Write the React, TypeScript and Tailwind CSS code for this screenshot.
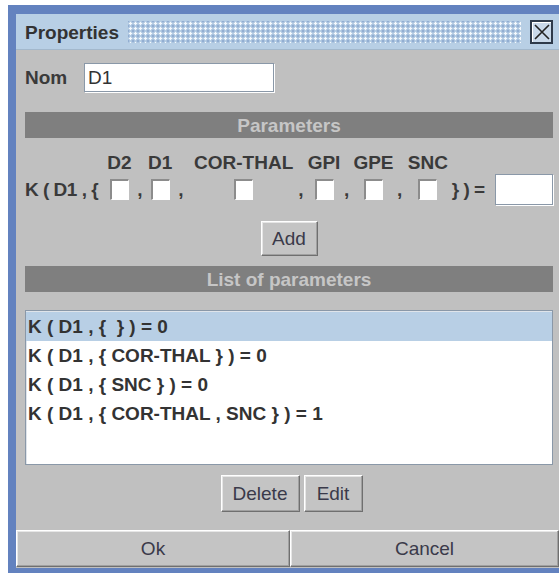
import React from "react";

const cols = [
  { label: "D2", w: "w-[24px]" },
  { label: "D1", w: "w-[22px]" },
  { label: "COR-THAL", w: "w-[97px]" },
  { label: "GPI", w: "w-[28px]" },
  { label: "GPE", w: "w-[35px]" },
  { label: "SNC", w: "w-[38px]" },
];

const rows = [
  "K ( D1 , {  } ) = 0",
  "K ( D1 , { COR-THAL } ) = 0",
  "K ( D1 , { SNC } ) = 0",
  "K ( D1 , { COR-THAL , SNC } ) = 1",
];

function Check() {
  return (
    <span className="block w-[19px] h-[21px] bg-white border-t-2 border-l-2 border-[#8c8c8c] border-r border-b border-r-white border-b-white" />
  );
}

function Btn({ children, className = "" }: { children: React.ReactNode; className?: string }) {
  return (
    <button
      className={`bg-[#c4c4c4] border border-t-white border-l-white border-b-[#6f6f6f] border-r-[#6f6f6f] shadow-[inset_-1px_-1px_0_#a0a0a0,inset_1px_1px_0_#e6e6e6] font-normal text-[#3a3a4a] ${className}`}
    >
      {children}
    </button>
  );
}

function SectionBar({ title }: { title: string }) {
  return (
    <div className="h-[26px] bg-[#7f7f7f] flex items-center justify-center text-[#c6c6c6] font-bold">
      {title}
    </div>
  );
}

export default function App() {
  return (
    <div className="w-[559px] h-[573px] bg-white pt-[5px] pl-[8px] overflow-hidden font-['Liberation_Sans',Arial,sans-serif] text-[19px] text-[#3a3a3a] leading-none">
      <div className="w-[551px] h-[568px] bg-[#6382bf] pt-[9px] pl-[8px] pb-[5px] flex flex-col">
        {/* title bar */}
        <div className="h-[36px] bg-[#b8cfe5] border-b border-[#a3b8cc] flex items-center pl-[9px] pr-[6px]">
          <span className="font-bold text-[#333] pt-[2px]">Properties</span>
          <div className="flex-1 h-[22px] ml-[9px] mr-[9px] bg-[radial-gradient(circle,#f6f9fd_1.1px,transparent_1.4px),radial-gradient(circle,#86a3cc_1.1px,transparent_1.4px)] bg-[length:5px_5px] bg-[position:0_0,2.5px_2.5px]" />
          <div className="w-[23px] h-[24px] border-2 border-[#2e3a4a] bg-[#c9d9ea] shadow-[inset_1px_1px_0_#fff] flex items-center justify-center">
            <svg width="16" height="16" viewBox="0 0 16 16">
              <path d="M1 1 L15 15 M15 1 L1 15" stroke="#222" strokeWidth="1.6" />
            </svg>
          </div>
        </div>

        {/* body */}
        <div className="flex-1 bg-[#c0c0c0] flex flex-col pl-[9px] pr-[6px]">
          <div className="flex items-center mt-[13px] h-[29px]">
            <span className="font-bold w-[59px]">Nom</span>
            <div className="w-[190px] h-[29px] bg-white border border-[#8a98a8] shadow-[1px_1px_0_#fff] flex items-center pl-[3px] text-[#333]">
              D1
            </div>
          </div>

          <div className="mt-[20px]">
            <SectionBar title="Parameters" />
          </div>

          {/* parameter builder */}
          <div className="flex items-end mt-[15px] font-bold">
            <span className="h-[31px] flex items-center w-[83px] whitespace-pre tracking-[-0.5px]">K ( D1 , {"{"}</span>
            {cols.map((c, i) => (
              <React.Fragment key={c.label}>
                {i > 0 && (
                  <span className={`h-[31px] flex items-center ${i === 2 ? "w-[21px] pl-[7px]" : "w-[18px] pl-[6px]"}`}>,</span>
                )}
                <div className={`flex flex-col items-center ${c.w} ${i === 2 ? "ml-[3px]" : ""}`}>
                  <span className="h-[21px] whitespace-nowrap">{c.label}</span>
                  <span className="h-[31px] flex items-center">
                    <Check />
                  </span>
                </div>
              </React.Fragment>
            ))}
            <span className="h-[31px] flex items-center ml-[5px] w-[44px] whitespace-pre tracking-[-0.5px]">{"} ) ="}</span>
            <div className="h-[31px] w-[58px] bg-white border border-[#8a98a8] shadow-[1px_1px_0_#fff]" />
          </div>

          <div className="flex justify-center mt-[16px]">
            <Btn className="w-[57px] h-[35px]">Add</Btn>
          </div>

          <div className="mt-[10px]">
            <SectionBar title="List of parameters" />
          </div>

          {/* list box */}
          <div className="mt-[18px] h-[155px] bg-white border border-[#8a98a8] shadow-[inset_1px_1px_0_#dfe4ea] pt-[1px] font-bold text-[#333]">
            {rows.map((r, i) => (
              <div key={r} className={`h-[29px] flex items-center pl-[2px] whitespace-pre ${i === 0 ? "bg-[#b8cfe5]" : ""}`}>
                {r}
              </div>
            ))}
          </div>

          <div className="flex justify-center gap-[4px] mt-[10px] pl-[5px]">
            <Btn className="w-[79px] h-[37px]">Delete</Btn>
            <Btn className="w-[59px] h-[37px]">Edit</Btn>
          </div>

          <div className="flex mt-[18px] -ml-[9px] -mr-[6px]">
            <Btn className="w-[274px] h-[37px]">Ok</Btn>
            <Btn className="flex-1 h-[37px]">Cancel</Btn>
          </div>
        </div>
      </div>
    </div>
  );
}
